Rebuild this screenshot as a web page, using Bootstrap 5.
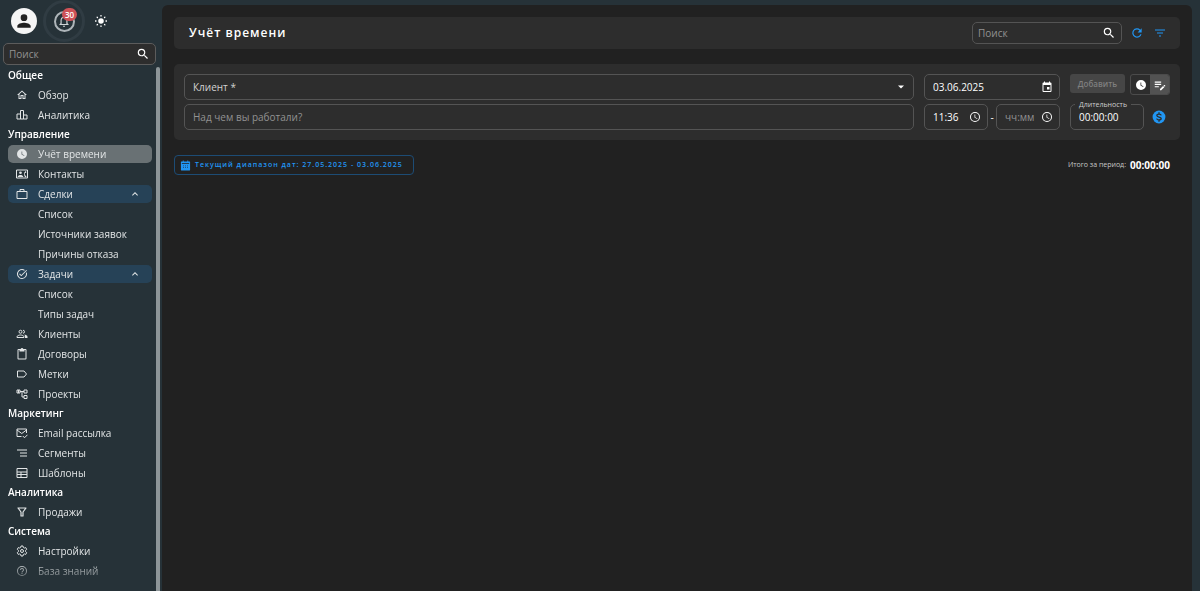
<!DOCTYPE html>
<html lang="ru" data-bs-theme="dark">
<head>
<meta charset="utf-8">
<meta name="viewport" content="width=device-width, initial-scale=1">
<title>Учёт времени</title>
<link rel="stylesheet" href="https://cdn.jsdelivr.net/npm/bootstrap@5.3.0/dist/css/bootstrap.min.css">
<style>
body { background: #263238; color: #fff; font: 10px/16px "Open Sans", "Noto Sans", sans-serif; }
svg { fill: currentColor; display: block; flex: none; }
.plain { background: none; border: 0; padding: 0; color: inherit; }
.i12 { width: 12px; height: 12px; }
.i14 { width: 14px; height: 14px; }
.side { width: 162px; height: 100vh; }
.topbar { height: 42px; padding-left: 11px; }
.avatar { width: 26px; height: 26px; background: #f5f5f5; color: #212121; }
.bell { width: 42px; height: 42px; margin-left: 6px; border: 3px solid #303c43; color: #cfd4d6; }
.bell-ring { width: 21px; height: 21px; border: 2px solid #aeb5b9; }
.count { top: 5px; left: 16px; min-width: 15px; height: 13px; padding: 0 3px; border-radius: 7px; background: #cf5257; color: #fff; font-size: 8px; line-height: 13px; font-weight: 600; }
.theme { margin-left: 10px; }
.box { background: #2d2d2d; border: 1px solid #545454; border-radius: 5px; color: #fff; }
.box:focus-within { border-color: #2196f3; }
.box input, .box select { background: none; border: 0; outline: 0; padding: 0; color: inherit; min-width: 0; width: 100%; font-size: 10px; line-height: 16px; appearance: none; }
.box ::placeholder { color: #929292; opacity: 1; }
.side-search { height: 22px; margin: 1px 6px 0 3px; padding: 0 5px; border-color: #5c5c5c; }
.menu-area { min-height: 0; }
.menu-wrap { padding: 1px 10px 0 8px; overflow: hidden; -webkit-mask-image: linear-gradient(to top, transparent, #000 34px); mask-image: linear-gradient(to top, transparent, #000 34px); }
.track { width: 4px; top: 2px; right: 2px; bottom: 0; background: #8d9598; border-radius: 3px 3px 0 0; }
.group-title { font-size: 10px; line-height: 19px; font-weight: 600; margin: 0; color: #fff; }
.item { flex: none; height: 18px; margin: 1px 0; padding: 0 11px 0 8px; border-radius: 5px; color: #e2e5e6; text-decoration: none; }
.item:hover { color: #fff; background: #37474f; }
.item svg:first-child { width: 12px; height: 12px; margin-right: 10px; }
.item.sub { padding-left: 30px; }
.item.active { background: #697174; }
.item.open { background: #264257; }
.page { margin: 5px 8px 0 0; padding: 12px 12px 0; background: #212121; border-radius: 6px 6px 0 0; min-height: calc(100vh - 5px); }
.panel { background: #2d2d2d; border-radius: 5px; }
.head { height: 32px; padding: 0 14px 0 15px; }
.head h1 { font-size: 12px; line-height: 20px; font-weight: 600; letter-spacing: 1px; margin: 0; }
.head-search { width: 150px; height: 22px; padding: 0 5px; }
.blue { color: #2196f3; }
.filter { margin-left: 10px; }
.entry { margin-top: 15px; padding: 10px; gap: 10px; }
.rows { gap: 4px; }
.field { height: 26px; padding: 0 6px 0 8px; }
.field select { color: #d2d2d2; }
.w-date { width: 136px; }
.w-time { width: 64px; }
.w-tools { width: 100px; }
.tool-row { height: 26px; }
.duration { width: 74px; }
.duration label { top: -6px; left: 4px; padding: 0 4px; background: #2d2d2d; color: #d0d0d0; font-size: 7px; line-height: 12px; white-space: nowrap; }
.add, .add:disabled { width: 55px; height: 19px; padding: 0; border: 0; border-radius: 3px; background: #464646; color: #7f7f7f; font-size: 8px; line-height: 19px; font-weight: 600; opacity: 1; }
.mode { width: 40px; height: 21px; border: 1px solid #4b4b4b; border-radius: 3px; overflow: hidden; }
.mode button { width: 50%; }
.mode .on { background: #525252; }
.range { height: 20px; padding: 0 10px 0 5px; border: 1px solid #1d4c75; border-radius: 4px; color: #2196f3; font-size: 7px; font-weight: 600; letter-spacing: 1px; line-height: 18px; }
.range:hover { border-color: #2196f3; color: #2196f3; }
.summary { margin-top: 15px; padding-right: 10px; }
.summary span { font-size: 7px; color: #c8c8c8; }
.summary strong { font-weight: 700; }
</style>
</head>
<body>
<svg class="d-none" aria-hidden="true">
<symbol id="search" viewBox="0 0 24 24"><path d="M15.5 14h-.79l-.28-.27A6.471 6.471 0 0 0 16 9.5 6.5 6.5 0 1 0 9.5 16c1.61 0 3.09-.59 4.230-1.570l.27.28v.79l5 4.990L20.490 19l-4.990-5zm-6 0C7.010 14 5 11.990 5 9.500S7.010 5 9.500 5 14 7.010 14 9.500 11.990 14 9.500 14z"/></symbol>
<symbol id="clock" viewBox="0 0 24 24"><path d="M12 2a10 10 0 1 0 0 20 10 10 0 0 0 0-20m4.200 14.200L11 13V7h1.500v5.200l4.500 2.700z"/></symbol>
<symbol id="clock-o" viewBox="0 0 24 24"><path d="M12 2a10 10 0 1 0 0 20 10 10 0 0 0 0-20m0 18a8 8 0 1 1 0-16 8 8 0 0 1 0 16m.5-13H11v6l5.250 3.150.75-1.230-4.500-2.670z"/></symbol>
<symbol id="up" viewBox="0 0 24 24"><path d="m12 8-6 6 1.410 1.410L12 10.830l4.590 4.580L18 14z"/></symbol>
</svg>
<div class="d-flex">
<aside class="side d-flex flex-column flex-shrink-0 sticky-top">
  <div class="topbar d-flex align-items-center">
    <button class="plain avatar rounded-circle d-flex align-items-center justify-content-center" aria-label="Профиль"><svg width="20" height="20" viewBox="0 0 24 24"><path d="M12 12a4 4 0 1 0 0-8 4 4 0 0 0 0 8m0 2c-2.670 0-8 1.340-8 4v2h16v-2c0-2.660-5.330-4-8-4"/></svg></button>
    <button class="plain bell position-relative rounded-circle d-flex align-items-center justify-content-center" aria-label="Уведомления"><span class="bell-ring rounded-circle d-flex align-items-center justify-content-center"><svg width="14" height="14" viewBox="0 0 24 24"><path d="M12 22a2 2 0 0 0 2-2h-4a2 2 0 0 0 2 2m6-6v-5c0-3.070-1.630-5.640-4.500-6.320V4a1.500 1.500 0 0 0-3 0v.68C7.640 5.360 6 7.920 6 11v5l-2 2v1h16v-1zm-2 1H8v-6c0-2.480 1.510-4.500 4-4.500s4 2.020 4 4.500z"/></svg></span><span class="count position-absolute">30</span></button>
    <button class="plain theme" aria-label="Светлая тема"><svg width="12" height="12" viewBox="0 0 24 24"><circle cx="12" cy="12" r="5.500"/><path fill="none" stroke="currentColor" stroke-width="2.600" stroke-linecap="round" d="M12 1v1M12 22v1M1 12h1M22 12h1M4.200 4.200l.7.7M19.100 19.100l.7.7M4.200 19.800l.7-.7M19.100 4.900l.7-.7"/></svg></button>
  </div>
  <div class="box side-search d-flex align-items-center"><input type="text" placeholder="Поиск" aria-label="Поиск по меню"><svg class="i14"><use href="#search"/></svg></div>
  <div class="menu-area position-relative flex-grow-1 d-flex flex-column">
  <nav class="menu-wrap flex-grow-1 d-flex flex-column">
    <h2 class="group-title">Общее</h2>
    <a class="item d-flex align-items-center" href="#"><svg viewBox="0 0 24 24"><path d="m12 5.690 5 4.500V18h-2v-6H9v6H7v-7.810zM12 3 2 12h3v8h6v-6h2v6h6v-8h3z"/></svg>Обзор</a>
    <a class="item d-flex align-items-center" href="#"><svg viewBox="0 0 24 24"><path fill="none" stroke="currentColor" stroke-width="2" d="M2 20V10h7v10zM9 20V3h6v17zM15 20v-8h7v8z"/></svg>Аналитика</a>
    <h2 class="group-title">Управление</h2>
    <a class="item active d-flex align-items-center" href="#" aria-current="page"><svg><use href="#clock"/></svg>Учёт времени</a>
    <a class="item d-flex align-items-center" href="#"><svg viewBox="0 0 24 24"><path fill="none" stroke="currentColor" stroke-width="2" d="M1 4h22v16H1z"/><circle cx="9" cy="9.500" r="2.700"/><path d="M3.500 18v-1c0-2 3.500-3.200 5.500-3.200s5.500 1.200 5.500 3.200v1zM18 15h1.500l1.500 2-2 2a8.500 8.500 0 0 1 0-13l2 2-1.500 2H18a6 6 0 0 0 0 5"/></svg>Контакты</a>
    <a class="item open d-flex align-items-center" href="#" aria-expanded="true"><svg viewBox="0 0 24 24"><path fill="none" stroke="currentColor" stroke-width="2" stroke-linejoin="round" d="M2 7h20v14H2zM8 7V3h8v4"/></svg>Сделки<svg class="i12 ms-auto"><use href="#up"/></svg></a>
    <a class="item sub d-flex align-items-center" href="#">Список</a>
    <a class="item sub d-flex align-items-center" href="#">Источники заявок</a>
    <a class="item sub d-flex align-items-center" href="#">Причины отказа</a>
    <a class="item open d-flex align-items-center" href="#" aria-expanded="true"><svg viewBox="0 0 24 24"><path d="M22 5.180 10.590 16.600l-4.240-4.240 1.410-1.410 2.830 2.830 10-10zm-2.210 5.040A8 8 0 1 1 12 4c1.580 0 3.040.46 4.280 1.250l1.440-1.440A10 10 0 1 0 21.390 8.600z"/></svg>Задачи<svg class="i12 ms-auto"><use href="#up"/></svg></a>
    <a class="item sub d-flex align-items-center" href="#">Список</a>
    <a class="item sub d-flex align-items-center" href="#">Типы задач</a>
    <a class="item d-flex align-items-center" href="#"><svg viewBox="0 0 24 24"><path fill="none" stroke="currentColor" stroke-width="2" d="M2 19v-1.500c0-2 4-3.500 7-3.500s7 1.500 7 3.500V19zM9 4.500a3 3 0 1 0 0 6 3 3 0 0 0 0-6M14 4.500a3 3 0 1 1 0 6"/><path d="M16.700 13.200c2.500.4 6.300 1.700 6.300 4.300V20h-5v-2.500c0-1.800-.5-3.300-1.300-4.300"/></svg>Клиенты</a>
    <a class="item d-flex align-items-center" href="#"><svg viewBox="0 0 24 24"><path d="M19 2h-4.200a3 3 0 0 0-5.600 0H5a2 2 0 0 0-2 2v17a2 2 0 0 0 2 2h14a2 2 0 0 0 2-2V4a2 2 0 0 0-2-2m0 19H5V4h2v3h10V4h2z"/></svg>Договоры</a>
    <a class="item d-flex align-items-center" href="#"><svg viewBox="0 0 24 24"><path fill="none" stroke="currentColor" stroke-width="2" stroke-linejoin="round" d="M3 6h13l5 6-5 6H3z"/></svg>Метки</a>
    <a class="item d-flex align-items-center" href="#"><svg viewBox="0 0 24 24"><path fill="none" stroke="currentColor" stroke-width="2" d="M2 4h6v6H2zM16 4h6v6h-6zM16 15h6v6h-6zM8 7h8M12 7v11h4M5 4v6"/></svg>Проекты</a>
    <h2 class="group-title">Маркетинг</h2>
    <a class="item d-flex align-items-center" href="#"><svg viewBox="0 0 24 24"><path fill="none" stroke="currentColor" stroke-width="2" d="M11 19H2V4h19v8M2 6l9.500 7L21 6M13.500 18l3.500 3.500 6-6"/></svg>Email рассылка</a>
    <a class="item d-flex align-items-center" href="#"><svg viewBox="0 0 24 24"><path fill="none" stroke="currentColor" stroke-width="2.400" d="M2 6h20M8 12h14M8 18h14"/></svg>Сегменты</a>
    <a class="item d-flex align-items-center" href="#"><svg viewBox="0 0 24 24"><path fill="none" stroke="currentColor" stroke-width="2" stroke-linejoin="round" d="M2 3h20v18H2zM2 10h20M2 15h20M10 10v11"/></svg>Шаблоны</a>
    <h2 class="group-title">Аналитика</h2>
    <a class="item d-flex align-items-center" href="#"><svg viewBox="0 0 24 24"><path fill="none" stroke="currentColor" stroke-width="2.400" stroke-linejoin="round" d="M4 4h16l-6 8v8h-4v-8z"/></svg>Продажи</a>
    <h2 class="group-title">Система</h2>
    <a class="item d-flex align-items-center" href="#"><svg viewBox="0 0 24 24"><path fill="none" stroke="currentColor" stroke-width="2" stroke-linejoin="round" d="M10 2h4l.6 3 2 1.100 2.800-1 2 3.500-2.200 2v2.800l2.200 2-2 3.500-2.800-1-2 1.100-.6 3h-4l-.6-3-2-1.100-2.800 1-2-3.500 2.200-2v-2.800l-2.200-2 2-3.500 2.800 1 2-1.100z"/><circle cx="12" cy="12" r="3" fill="none" stroke="currentColor" stroke-width="2"/></svg>Настройки</a>
    <a class="item d-flex align-items-center" href="#"><svg viewBox="0 0 24 24"><path d="M11 18h2v-2h-2zm1-16a10 10 0 1 0 0 20 10 10 0 0 0 0-20m0 18a8 8 0 1 1 0-16 8 8 0 0 1 0 16m0-14a4 4 0 0 0-4 4h2a2 2 0 0 1 4 0c0 2-3 1.750-3 5h2c0-2.250 3-2.500 3-5a4 4 0 0 0-4-4"/></svg>База знаний</a>
  </nav>
  <div class="track position-absolute"></div>
  </div>
</aside>
<main class="page flex-grow-1">
  <header class="panel head d-flex align-items-center">
    <h1 class="me-auto">Учёт времени</h1>
    <div class="box head-search d-flex align-items-center"><input type="text" placeholder="Поиск" aria-label="Поиск"><svg class="i14"><use href="#search"/></svg></div>
    <button class="plain blue ms-2" aria-label="Обновить"><svg class="i14" viewBox="0 0 24 24"><path d="M17.650 6.350A8 8 0 1 0 19.730 14h-2.080A6 6 0 1 1 12 6c1.660 0 3.140.69 4.220 1.780L13 11h7V4z"/></svg></button>
    <button class="plain blue filter" aria-label="Фильтр"><svg class="i12" viewBox="0 0 24 24"><path d="M10 19h4v-2h-4zM2 5v2h20V5zm4 8h12v-2H6z"/></svg></button>
  </header>
  <form class="panel entry d-flex">
    <div class="rows d-flex flex-column flex-grow-1">
      <div class="box field d-flex align-items-center"><select aria-label="Клиент" required><option>Клиент *</option></select><svg class="i12" viewBox="0 0 24 24"><path d="m6 9 6 6 6-6z"/></svg></div>
      <div class="box field d-flex align-items-center"><input type="text" placeholder="Над чем вы работали?" aria-label="Над чем вы работали?"></div>
    </div>
    <div class="rows w-date d-flex flex-column">
      <div class="box field d-flex align-items-center"><input type="text" value="03.06.2025" aria-label="Дата"><svg class="i12" viewBox="0 0 24 24"><path d="M17 12h-5v5h5zM16 1v2H8V1H6v2H5a2 2 0 0 0-2 2v15a2 2 0 0 0 2 2h14a2 2 0 0 0 2-2V5a2 2 0 0 0-2-2h-1V1zm3 19H5V8h14z"/></svg></div>
      <div class="d-flex align-items-center justify-content-between">
        <div class="box field w-time d-flex align-items-center"><input type="text" value="11:36" aria-label="Начало"><svg class="i12"><use href="#clock-o"/></svg></div>
        <span>-</span>
        <div class="box field w-time d-flex align-items-center"><input type="text" placeholder="чч:мм" aria-label="Окончание"><svg class="i12"><use href="#clock-o"/></svg></div>
      </div>
    </div>
    <div class="rows w-tools d-flex flex-column">
      <div class="tool-row d-flex justify-content-between align-items-start">
        <button type="button" class="btn add" disabled>Добавить</button>
        <div class="mode d-flex" role="group" aria-label="Режим ввода">
          <button type="button" class="plain d-flex align-items-center justify-content-center" aria-label="Таймер"><svg class="i12"><use href="#clock"/></svg></button>
          <button type="button" class="plain on d-flex align-items-center justify-content-center" aria-label="Вручную"><svg class="i14" viewBox="0 0 24 24"><path d="M3 10h11v2H3zm0-2h11V6H3zm0 8h7v-2H3zm15.010-3.130.71-.71a1 1 0 0 1 1.410 0l.71.71a1 1 0 0 1 0 1.410l-.71.71zm-.71.71-5.300 5.300V21h2.120l5.300-5.300z"/></svg></button>
        </div>
      </div>
      <div class="d-flex align-items-center">
        <div class="box field duration position-relative d-flex align-items-center"><label class="position-absolute" for="dur">Длительность</label><input id="dur" type="text" value="00:00:00"></div>
        <button type="button" class="plain blue ms-2" aria-label="Оплачиваемое"><svg class="i14" viewBox="0 0 24 24"><circle cx="12" cy="12" r="11"/><path fill="none" stroke="#2d2d2d" stroke-width="2.200" d="M12 4v3M12 17v3M15.800 9.300C15.500 7.700 14 7 12 7S8.300 8 8.300 9.600c0 3.400 7.500 1.500 7.500 5 0 1.600-1.700 2.500-3.800 2.500s-3.700-.8-3.900-2.600"/></svg></button>
      </div>
    </div>
  </form>
  <div class="summary d-flex align-items-center justify-content-between">
    <button class="btn range d-flex align-items-center"><svg class="me-1" width="11" height="11" viewBox="0 0 24 24"><path fill-rule="evenodd" d="M6 1h2v2h8V1h2v2h3a1 1 0 0 1 1 1v18a1 1 0 0 1-1 1H3a1 1 0 0 1-1-1V4a1 1 0 0 1 1-1h3zM4 7v1.500h16V7zm3 5v1.500h1.500V12zm4.200 0v1.500h1.500V12zm4.200 0v1.500h1.500V12zM7 16v1.500h1.500V16zm4.200 0v1.500h1.500V16zm4.200 0v1.500h1.500V16z"/></svg>Текущий диапазон дат: 27.05.2025 - 03.06.2025</button>
    <div class="d-flex align-items-center gap-1"><span>Итого за период:</span><strong>00:00:00</strong></div>
  </div>
</main>
</div>
<script src="https://cdn.jsdelivr.net/npm/bootstrap@5.3.0/dist/js/bootstrap.bundle.min.js"></script>
</body>
</html>
